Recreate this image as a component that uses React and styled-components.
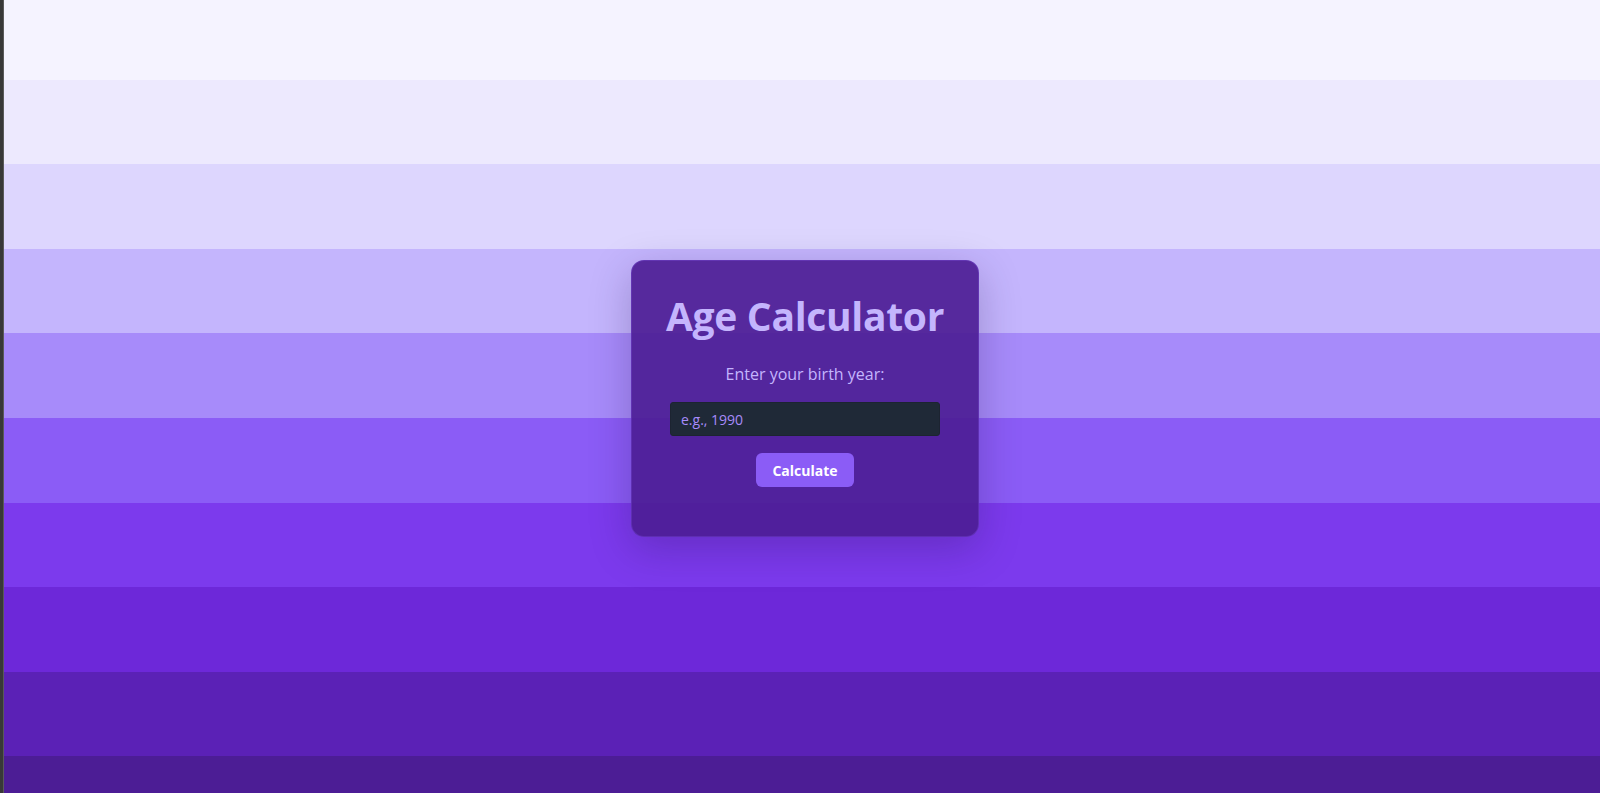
import React, { useState } from 'react';
import styled, { createGlobalStyle } from 'styled-components';

const GlobalStyle = createGlobalStyle`
  html, body {
    margin: 0;
    padding: 0;
    height: 100%;
    overflow: hidden;
  }
  body {
    font-family: "Open Sans", "Noto Sans", "Liberation Sans", sans-serif;
  }
  * {
    box-sizing: border-box;
  }
`;

const SHADES = [
  '#f5f3ff',
  '#ede9fe',
  '#ddd6fe',
  '#c4b5fd',
  '#a78bfa',
  '#8b5cf6',
  '#7c3aed',
  '#6d28d9',
  '#5b21b6',
  '#4c1d95',
];

const Page = styled.div`
  display: flex;
  height: 100vh;
  width: 100vw;
`;

const WindowEdge = styled.div`
  flex: 0 0 4px;
  background-color: #383838;
  border-right: 1px solid #5a5a5a;
`;

const Main = styled.main`
  position: relative;
  flex: 1;
  overflow: hidden;
`;

const Stripes = styled.div`
  display: flex;
  flex-direction: column;
  margin-top: -5px;
`;

const Stripe = styled.div`
  height: 84.6px;
  flex-shrink: 0;
  background-color: ${props => props.shade};
`;

const Overlay = styled.div`
  position: absolute;
  inset: 0;
  display: flex;
  align-items: center;
  justify-content: center;
  padding: 4px 0 0 6px;
`;

const Card = styled.div`
  width: 348px;
  height: 277px;
  padding: 31px 38px 0;
  display: flex;
  flex-direction: column;
  align-items: center;
  background-color: rgba(76, 29, 149, 0.92);
  border: 1px solid rgba(139, 92, 246, 0.25);
  border-radius: 13px;
  box-shadow: 0 12px 40px rgba(30, 10, 70, 0.25);
`;

const Title = styled.h1`
  margin: 0;
  font-size: 39px;
  line-height: 48px;
  letter-spacing: -0.3px;
  font-weight: 700;
  color: #c4b5fd;
  white-space: nowrap;
`;

const Prompt = styled.label`
  margin-top: 22px;
  font-size: 16px;
  line-height: 24px;
  color: #c4b5fd;
`;

const YearInput = styled.input`
  margin-top: 16px;
  width: 100%;
  height: 34px;
  padding: 0 10px;
  border: 1px solid #1c2431;
  border-radius: 3px;
  background-color: #1f2937;
  color: #ede9fe;
  font-family: inherit;
  font-size: 14px;
  outline: none;

  &::placeholder {
    color: #a78bfa;
  }
`;

const Button = styled.button`
  margin-top: 17px;
  width: 98px;
  height: 34px;
  border: none;
  border-radius: 6px;
  background-color: #8b5cf6;
  color: #fff;
  font-family: inherit;
  font-size: 14px;
  font-weight: 700;
  cursor: pointer;

  &:hover {
    background-color: #7c3aed;
  }
`;

const Result = styled.p`
  margin: 14px 0 0;
  font-size: 16px;
  color: #ddd6fe;
`;

function App() {
  const [year, setYear] = useState('');
  const [result, setResult] = useState('');

  const handleCalculate = () => {
    const born = parseInt(year, 10);
    const now = new Date().getFullYear();
    if (!born || born > now) {
      setResult('Please enter a valid year.');
      return;
    }
    setResult(`You are ${now - born} years old.`);
  };

  return (
    <>
      <GlobalStyle />
      <Page>
        <WindowEdge />
        <Main>
          <Stripes>
            {SHADES.map(shade => (
              <Stripe key={shade} shade={shade} />
            ))}
          </Stripes>
          <Overlay>
            <Card>
              <Title>Age Calculator</Title>
              <Prompt htmlFor="birth-year">Enter your birth year:</Prompt>
              <YearInput
                id="birth-year"
                type="number"
                placeholder="e.g., 1990"
                value={year}
                onChange={e => setYear(e.target.value)}
              />
              <Button onClick={handleCalculate}>Calculate</Button>
              {result && <Result>{result}</Result>}
            </Card>
          </Overlay>
        </Main>
      </Page>
    </>
  );
}

export default App;
